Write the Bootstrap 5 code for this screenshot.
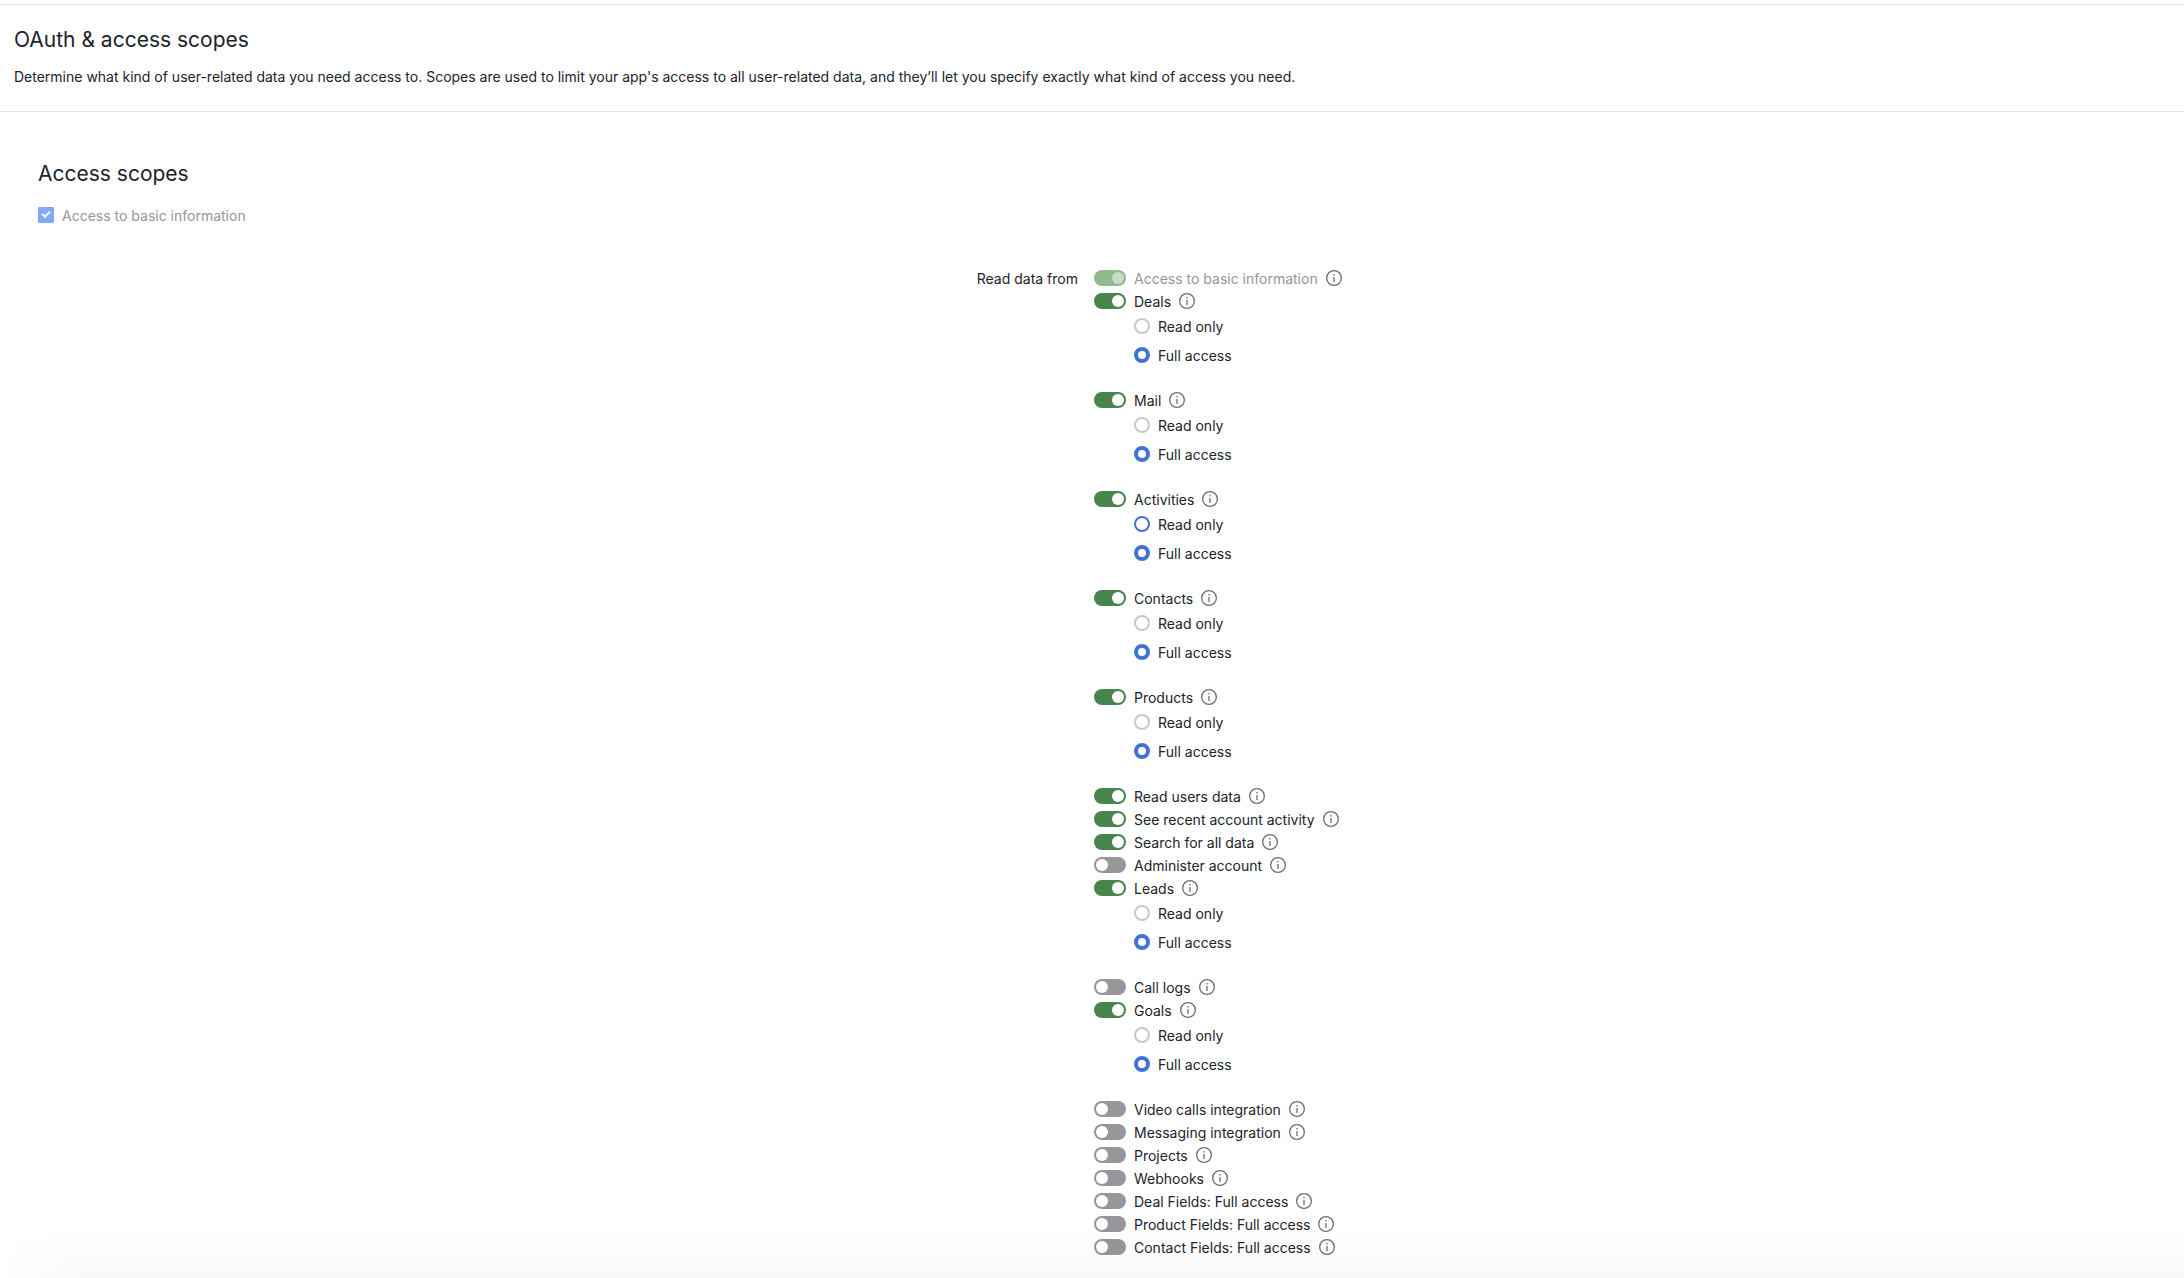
<!DOCTYPE html>
<html lang="en">
<head>
<meta charset="utf-8">
<meta name="viewport" content="width=device-width, initial-scale=1">
<title>OAuth &amp; access scopes</title>
<link rel="stylesheet" href="https://cdn.jsdelivr.net/npm/bootstrap@5.3.0/dist/css/bootstrap.min.css">
<style>
body { font: 14px/20px Inter, "Liberation Sans", sans-serif; color: #21232c; background: #fff; }
.page-intro { border-top: 1px solid #e1e1e2; border-bottom: 1px solid #e1e1e2; margin-top: 4px; padding: 21px 14px 24px; }
.page-intro h1, .scopes h2 { font-size: 21px; line-height: 28px; font-weight: 400; margin: 0; }
.page-intro h1 { margin-bottom: 13px; }
.scopes { padding: 48px 34px 12px 38px; }
.scopes h2 { margin-bottom: 17px; }
.scopes label { line-height: 20px; }
.muted-label { color: #95969b; }
.form-check-input.basic-check, .form-check-input.scope-switch, .form-check-input.scope-radio { float: none; flex: none; margin: 0; width: 16px; height: 16px; opacity: 1; border: 0; box-shadow: none; }
.form-check-input.basic-check { border-radius: 1px; background: #7faafb; position: relative; }
.form-check-input.basic-check::after { content: ""; position: absolute; left: 4px; top: 4px; width: 8px; height: 5px; border: solid #fff; border-width: 0 0 2px 2px; transform: rotate(-45deg); }
.form-check-input.scope-switch { display: flex; width: 32px; padding: 2px; border-radius: 8px; background: #96969b; }
.form-check-input.scope-switch::before { content: ""; width: 12px; height: 12px; border-radius: 50%; background: #fff; }
.form-check-input.scope-switch:checked { justify-content: flex-end; background: #48854d; }
.form-check-input.scope-switch:disabled { background: #8fb98f; }
.form-check-input.scope-switch:disabled::before { background: #c6dcc6; }
.form-check-input.scope-radio { border: 2px solid #c8c8c9; background: #fff; }
.form-check-input.scope-radio:checked { border: 4px solid #4272d8; background: #fff; }
.form-check-input.scope-radio.active-option { border-color: #4272d8; }
.read-data { margin-top: 43px; }
.scope-list { display: grid; row-gap: 3px; }
.scope-line { display: flex; align-items: center; column-gap: 8px; height: 20px; }
.scope-line label { padding-top: 2px; }
.scope-line svg { width: 16px; height: 16px; flex: none; color: #6b6d75; }
.access-options { padding: 2px 0 22px 40px; display: grid; row-gap: 9px; }
.bottom-fade { height: 50px; pointer-events: none; background: linear-gradient(rgba(38,41,44,0), rgba(38,41,44,.03)); -webkit-mask-image: linear-gradient(90deg, transparent, #000 90px); mask-image: linear-gradient(90deg, transparent, #000 90px); }
</style>
</head>
<body>
<svg class="d-none" xmlns="http://www.w3.org/2000/svg">
<symbol id="info" viewBox="0 0 16 16"><circle cx="8" cy="8" r="7.35" fill="none" stroke="currentColor" stroke-width="1.3"/><path d="M8 7v5M8 4v1.6" fill="none" stroke="currentColor" stroke-width="1.3"/></symbol>
</svg>
<header class="page-intro">
<h1>OAuth &amp; access scopes</h1>
<p class="mb-0">Determine what kind of user-related data you need access to. Scopes are used to limit your app's access to all user-related data, and they’ll let you specify exactly what kind of access you need.</p>
</header>
<main class="scopes">
<h2>Access scopes</h2>
<div class="scope-line"><input class="form-check-input basic-check" type="checkbox" id="basic" checked disabled><label class="muted-label" for="basic">Access to basic information</label></div>
<form class="row g-0 read-data">
<div class="col-6 text-end pe-3"><div class="scope-line justify-content-end"><label id="read-from">Read data from</label></div></div>
<div class="col-6 scope-list" role="group" aria-labelledby="read-from">
<div class="scope-line"><input class="form-check-input scope-switch" type="checkbox" role="switch" id="s-basic" checked disabled><label class="muted-label" for="s-basic">Access to basic information</label><svg><use href="#info"/></svg></div>
<div class="scope-line"><input class="form-check-input scope-switch" type="checkbox" role="switch" id="s-deals" checked><label for="s-deals">Deals</label><svg><use href="#info"/></svg></div>
<div class="access-options">
<div class="scope-line"><input class="form-check-input scope-radio" type="radio" name="deals" id="deals-read"><label for="deals-read">Read only</label></div>
<div class="scope-line"><input class="form-check-input scope-radio" type="radio" name="deals" id="deals-full" checked><label for="deals-full">Full access</label></div>
</div>
<div class="scope-line"><input class="form-check-input scope-switch" type="checkbox" role="switch" id="s-mail" checked><label for="s-mail">Mail</label><svg><use href="#info"/></svg></div>
<div class="access-options">
<div class="scope-line"><input class="form-check-input scope-radio" type="radio" name="mail" id="mail-read"><label for="mail-read">Read only</label></div>
<div class="scope-line"><input class="form-check-input scope-radio" type="radio" name="mail" id="mail-full" checked><label for="mail-full">Full access</label></div>
</div>
<div class="scope-line"><input class="form-check-input scope-switch" type="checkbox" role="switch" id="s-activities" checked><label for="s-activities">Activities</label><svg><use href="#info"/></svg></div>
<div class="access-options">
<div class="scope-line"><input class="form-check-input scope-radio active-option" type="radio" name="activities" id="activities-read"><label for="activities-read">Read only</label></div>
<div class="scope-line"><input class="form-check-input scope-radio" type="radio" name="activities" id="activities-full" checked><label for="activities-full">Full access</label></div>
</div>
<div class="scope-line"><input class="form-check-input scope-switch" type="checkbox" role="switch" id="s-contacts" checked><label for="s-contacts">Contacts</label><svg><use href="#info"/></svg></div>
<div class="access-options">
<div class="scope-line"><input class="form-check-input scope-radio" type="radio" name="contacts" id="contacts-read"><label for="contacts-read">Read only</label></div>
<div class="scope-line"><input class="form-check-input scope-radio" type="radio" name="contacts" id="contacts-full" checked><label for="contacts-full">Full access</label></div>
</div>
<div class="scope-line"><input class="form-check-input scope-switch" type="checkbox" role="switch" id="s-products" checked><label for="s-products">Products</label><svg><use href="#info"/></svg></div>
<div class="access-options">
<div class="scope-line"><input class="form-check-input scope-radio" type="radio" name="products" id="products-read"><label for="products-read">Read only</label></div>
<div class="scope-line"><input class="form-check-input scope-radio" type="radio" name="products" id="products-full" checked><label for="products-full">Full access</label></div>
</div>
<div class="scope-line"><input class="form-check-input scope-switch" type="checkbox" role="switch" id="s-users" checked><label for="s-users">Read users data</label><svg><use href="#info"/></svg></div>
<div class="scope-line"><input class="form-check-input scope-switch" type="checkbox" role="switch" id="s-recent" checked><label for="s-recent">See recent account activity</label><svg><use href="#info"/></svg></div>
<div class="scope-line"><input class="form-check-input scope-switch" type="checkbox" role="switch" id="s-search" checked><label for="s-search">Search for all data</label><svg><use href="#info"/></svg></div>
<div class="scope-line"><input class="form-check-input scope-switch" type="checkbox" role="switch" id="s-admin"><label for="s-admin">Administer account</label><svg><use href="#info"/></svg></div>
<div class="scope-line"><input class="form-check-input scope-switch" type="checkbox" role="switch" id="s-leads" checked><label for="s-leads">Leads</label><svg><use href="#info"/></svg></div>
<div class="access-options">
<div class="scope-line"><input class="form-check-input scope-radio" type="radio" name="leads" id="leads-read"><label for="leads-read">Read only</label></div>
<div class="scope-line"><input class="form-check-input scope-radio" type="radio" name="leads" id="leads-full" checked><label for="leads-full">Full access</label></div>
</div>
<div class="scope-line"><input class="form-check-input scope-switch" type="checkbox" role="switch" id="s-calls"><label for="s-calls">Call logs</label><svg><use href="#info"/></svg></div>
<div class="scope-line"><input class="form-check-input scope-switch" type="checkbox" role="switch" id="s-goals" checked><label for="s-goals">Goals</label><svg><use href="#info"/></svg></div>
<div class="access-options">
<div class="scope-line"><input class="form-check-input scope-radio" type="radio" name="goals" id="goals-read"><label for="goals-read">Read only</label></div>
<div class="scope-line"><input class="form-check-input scope-radio" type="radio" name="goals" id="goals-full" checked><label for="goals-full">Full access</label></div>
</div>
<div class="scope-line"><input class="form-check-input scope-switch" type="checkbox" role="switch" id="s-video"><label for="s-video">Video calls integration</label><svg><use href="#info"/></svg></div>
<div class="scope-line"><input class="form-check-input scope-switch" type="checkbox" role="switch" id="s-messaging"><label for="s-messaging">Messaging integration</label><svg><use href="#info"/></svg></div>
<div class="scope-line"><input class="form-check-input scope-switch" type="checkbox" role="switch" id="s-projects"><label for="s-projects">Projects</label><svg><use href="#info"/></svg></div>
<div class="scope-line"><input class="form-check-input scope-switch" type="checkbox" role="switch" id="s-webhooks"><label for="s-webhooks">Webhooks</label><svg><use href="#info"/></svg></div>
<div class="scope-line"><input class="form-check-input scope-switch" type="checkbox" role="switch" id="s-dealf"><label for="s-dealf">Deal Fields: Full access</label><svg><use href="#info"/></svg></div>
<div class="scope-line"><input class="form-check-input scope-switch" type="checkbox" role="switch" id="s-productf"><label for="s-productf">Product Fields: Full access</label><svg><use href="#info"/></svg></div>
<div class="scope-line"><input class="form-check-input scope-switch" type="checkbox" role="switch" id="s-contactf"><label for="s-contactf">Contact Fields: Full access</label><svg><use href="#info"/></svg></div>
</div>
</form>
</main>
<div class="fixed-bottom bottom-fade"></div>
<script src="https://cdn.jsdelivr.net/npm/bootstrap@5.3.0/dist/js/bootstrap.bundle.min.js"></script>
</body>
</html>
